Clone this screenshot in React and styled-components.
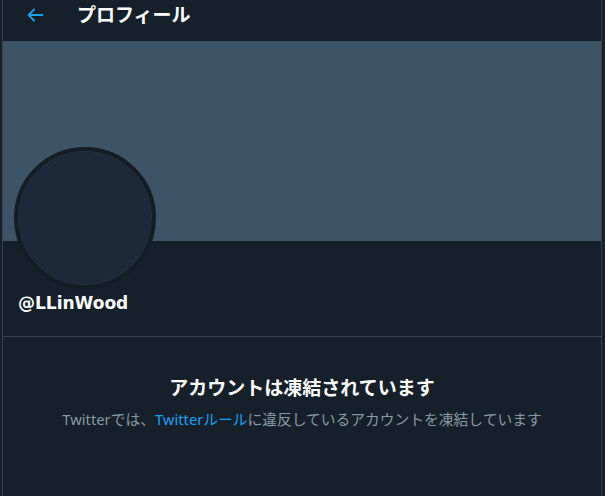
import React from "react";
import styled, { createGlobalStyle } from "styled-components";

const Global = createGlobalStyle`
  html, body { margin: 0; padding: 0; background: #15202b; }
  body { font-family: "Noto Sans", "Noto Sans CJK JP", sans-serif; }
`;

const Page = styled.div`
  display: flex;
  padding-left: 2px;
  min-height: 496px;
  background: #15202b;
`;

const Column = styled.main`
  width: 598px;
  border-left: 1px solid #38444d;
  border-right: 1px solid #38444d;
  display: flex;
  flex-direction: column;
`;

const Header = styled.header`
  height: 41px;
  display: flex;
  align-items: flex-start;
  padding-left: 20px;
  box-sizing: border-box;
`;

const BackBtn = styled.div`
  width: 24px;
  height: 24px;
  margin-top: 3px;
  display: flex;
  align-items: center;
  justify-content: center;
`;

const Title = styled.h2`
  margin: 0 0 0 30px;
  font-size: 19px;
  font-weight: 700;
  color: #fff;
  line-height: 30px;
`;

const Banner = styled.div`
  height: 200px;
  background: #3d5466;
`;

const Info = styled.div`
  position: relative;
  padding: 51px 15px 0 15px;
  height: 96px;
  box-sizing: border-box;
  border-bottom: 1px solid #38444d;
`;

const Avatar = styled.div`
  position: absolute;
  left: 11px;
  top: -94px;
  width: 134px;
  height: 134px;
  border-radius: 50%;
  border: 4px solid #141d26;
  background: #1c2938;
  box-shadow: inset 0 0 0 1px #22303f;
`;

const Handle = styled.div`
  font-family: "DejaVu Sans", "Noto Sans", sans-serif;
  font-size: 17px;
  font-weight: 700;
  color: #fff;
  line-height: 22px;
`;

const Notice = styled.section`
  display: flex;
  flex-direction: column;
  align-items: center;
  padding-top: 37px;
`;

const NoticeTitle = styled.div`
  font-size: 19px;
  font-weight: 700;
  color: #fff;
  line-height: 28px;
`;

const NoticeText = styled.div`
  margin-top: 7px;
  font-size: 14.75px;
  color: #8899a6;
  line-height: 20px;
`;

const Link = styled.span`
  color: #1da1f2;
`;

export default function App() {
  return (
    <>
      <Global />
      <Page>
        <Column>
          <Header>
            <BackBtn>
              <svg width="22" height="22" viewBox="0 0 24 24">
                <path
                  d="M20 11H7.414l4.293-4.293a1 1 0 0 0-1.414-1.414l-6 6a1 1 0 0 0 0 1.414l6 6a1 1 0 0 0 1.414-1.414L7.414 13H20a1 1 0 0 0 0-2z"
                  fill="#1da1f2"
                />
              </svg>
            </BackBtn>
            <Title>プロフィール</Title>
          </Header>
          <Banner />
          <Info>
            <Avatar />
            <Handle>@LLinWood</Handle>
          </Info>
          <Notice>
            <NoticeTitle>アカウントは凍結されています</NoticeTitle>
            <NoticeText>
              Twitterでは、<Link>Twitterルール</Link>に違反しているアカウントを凍結しています
            </NoticeText>
          </Notice>
        </Column>
      </Page>
    </>
  );
}
